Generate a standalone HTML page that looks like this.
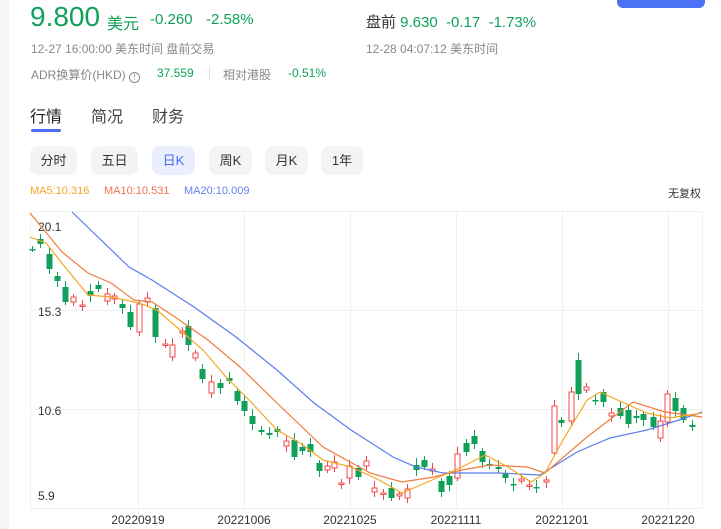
<!DOCTYPE html>
<html><head><meta charset="utf-8"><style>
*{margin:0;padding:0;box-sizing:border-box}
body{width:721px;height:529px;background:#fff;font-family:"Liberation Sans","Noto Sans CJK SC",sans-serif;position:relative;overflow:hidden;color:#333}
.strip{position:absolute;left:0;top:0;width:9px;height:529px;background:#f4f5f7}
.a{position:absolute;white-space:nowrap}
.g{color:#10a05a}
.gray{color:#888}
.btn{position:absolute;left:617px;top:-10px;width:88px;height:18px;background:#4a74f5;border-radius:6px}
.tb{position:absolute;top:146px;height:29px;background:#f4f4f6;border-radius:8px;font-size:13px;line-height:29px;text-align:center;color:#333}
</style></head><body>
<div class="strip"></div>
<div class="btn"></div>
<div class="a g" style="left:30px;top:2px;font-size:28px;line-height:30px">9.800</div>
<div class="a g" style="left:107px;top:10px;font-size:16px">美元</div>
<div class="a g" style="left:150px;top:11px;font-size:15px">-0.260</div>
<div class="a g" style="left:206px;top:11px;font-size:15px">-2.58%</div>
<div class="a" style="left:366px;top:11px;font-size:15px;color:#333">盘前 <span class="g">9.630 &nbsp;-0.17 &nbsp;-1.73%</span></div>
<div class="a gray" style="left:31px;top:40px;font-size:12px">12-27 16:00:00 美东时间 盘前交易</div>
<div class="a gray" style="left:366px;top:40px;font-size:12px">12-28 04:07:12 美东时间</div>
<div class="a gray" style="left:31px;top:66px;font-size:12px">ADR换算价(HKD) <span style="display:inline-block;width:11px;height:11px;border:1px solid #888;border-radius:50%;font-size:8px;line-height:9px;text-align:center;vertical-align:-1px">!</span></div>
<div class="a g" style="left:157px;top:66px;font-size:12px">37.559</div>
<div class="a" style="left:209px;top:67px;width:1px;height:12px;background:#ddd"></div>
<div class="a gray" style="left:223px;top:66px;font-size:12px">相对港股</div>
<div class="a g" style="left:288px;top:66px;font-size:12px">-0.51%</div>
<div class="a" style="left:30px;top:103px;font-size:16px;color:#222">行情</div>
<div class="a" style="left:91px;top:103px;font-size:16px;color:#444">简况</div>
<div class="a" style="left:152px;top:103px;font-size:16px;color:#444">财务</div>
<div class="a" style="left:31px;top:129px;width:30px;height:3px;background:#4a6cf5;border-radius:2px"></div>
<div class="tb" style="left:30px;width:47px">分时</div>
<div class="tb" style="left:91px;width:47px">五日</div>
<div class="tb" style="left:152px;width:43px;background:#eaeefd;color:#4a6cf5">日K</div>
<div class="tb" style="left:209px;width:43px">周K</div>
<div class="tb" style="left:265px;width:43px">月K</div>
<div class="tb" style="left:321px;width:42px">1年</div>
<div class="a" style="left:30px;top:185px;font-size:11px;color:#f5a623">MA5:10.316</div>
<div class="a" style="left:104px;top:185px;font-size:11px;color:#f07050">MA10:10.531</div>
<div class="a" style="left:184px;top:185px;font-size:11px;color:#6680f0">MA20:10.009</div>
<div class="a" style="left:668px;top:185px;font-size:11px;color:#333">无复权</div>
<svg class="a" style="left:0;top:0" width="721" height="529" id="c">
<g stroke="#f0f0f0" stroke-width="1">
<line x1="30" y1="211.5" x2="702" y2="211.5"/><line x1="30" y1="310.5" x2="702" y2="310.5"/><line x1="30" y1="409.5" x2="702" y2="409.5"/><line x1="30" y1="508.5" x2="702" y2="508.5"/>
<line x1="30.5" y1="211" x2="30.5" y2="509"/><line x1="138.5" y1="211" x2="138.5" y2="509"/><line x1="244.5" y1="211" x2="244.5" y2="509"/><line x1="350.5" y1="211" x2="350.5" y2="509"/><line x1="456.5" y1="211" x2="456.5" y2="509"/><line x1="562.5" y1="211" x2="562.5" y2="509"/><line x1="668.5" y1="211" x2="668.5" y2="509"/><line x1="702.5" y1="211" x2="702.5" y2="509"/>
</g>
<g font-size="12" fill="#333" font-family="Liberation Sans,sans-serif">
<text x="38" y="231">20.1</text><text x="38" y="316">15.3</text><text x="38" y="415">10.6</text><text x="38" y="500">5.9</text>
<g text-anchor="middle"><text x="138" y="524">20220919</text><text x="244" y="524">20221006</text><text x="350" y="524">20221025</text><text x="456" y="524">20221111</text><text x="562" y="524">20221201</text><text x="668" y="524">20221220</text></g>
</g>
<g id="k"></g>
<g fill="none" stroke-width="1.2">
<polyline stroke="#5b7cf0" points="72,212 129,267 152,280 194,307 236,337 277,370 314,403 351,430 393,457 416,467 443,473 499,473 540,475 577,452 610,438 647,430 679,420 702,412"/>
<polyline stroke="#f07c3c" points="30,213 62,252 88,273 111,283 134,300 152,302 175,317 208,340 240,367 277,403 323,447 370,473 402,482 434,477 462,470 490,465 527,467 545,473 587,437 633,402 665,412 702,417"/>
<polyline stroke="#f5a623" points="30,237 46,243 65,267 88,295 111,297 139,303 157,310 180,330 203,350 226,377 249,400 277,430 300,443 323,460 351,467 379,480 402,493 416,487 439,477 462,467 485,455 508,467 531,482 545,473 563,440 587,400 600,392 624,403 647,413 670,418 702,413"/>
</g>
</svg>
<script>
var d=[[23,249,249,'g'],[29,239,244,'g'],[35,254,269,'g'],[41,276,281,'g'],[47,287,302,'g'],[53,297,302,'r'],[59,305,306,'r'],[65,291,296,'g'],[71,285,289,'g'],[77,294,301,'r'],[82,296,299,'r'],[88,304,308,'g'],[94,312,327,'g'],[100,304,332,'r'],[106,298,302,'r'],[112,308,337,'g'],[119,344,345,'r'],[124,345,357,'r'],[131,331,333,'r'],[136,326,345,'g'],[141,353,358,'r'],[146,369,379,'g'],[152,382,393,'r'],[159,383,388,'g'],[165,378,381,'g'],[171,391,401,'g'],[176,401,411,'g'],[182,416,424,'g'],[188,430,432,'g'],[194,433,435,'g'],[200,429,432,'g'],[206,441,446,'r'],[212,440,457,'g'],[218,447,451,'g'],[224,444,452,'g'],[230,463,471,'g'],[236,466,470,'r'],[241,462,468,'r'],[246,483,484,'r'],[252,466,478,'r'],[258,468,477,'g'],[264,461,466,'r'],[270,488,492,'r'],[276,493,494,'r'],[282,488,498,'g'],[288,494,496,'r'],[294,489,498,'r'],[300,465,470,'g'],[306,460,467,'g'],[312,469,471,'r'],[318,481,492,'g'],[324,476,485,'g'],[330,454,478,'r'],[336,443,452,'g'],[342,436,444,'g'],[348,451,462,'g'],[353,464,466,'g'],[359,467,469,'g'],[364,474,478,'g'],[370,484,485,'g'],[376,479,481,'r'],[382,485,486,'r'],[387,487,488,'g'],[394,480,482,'r'],[400,406,453,'r'],[405,420,423,'g'],[412,392,421,'r'],[417,360,394,'g'],[423,387,390,'r'],[429,400,401,'g'],[435,392,402,'g'],[441,413,416,'r'],[447,408,416,'g'],[453,410,424,'g'],[459,416,418,'g'],[464,414,420,'g'],[471,417,427,'g'],[476,421,438,'r'],[481,394,422,'r'],[487,398,411,'g'],[493,408,420,'g'],[499,425,427,'g']];
var s='';d.forEach(function(c,i){var x=Math.round(c[0]*1.386)+0.5,t=c[1],b=c[2],col=c[3]=='g'?'#10a05a':'#f04848';var w=3+((i*7)%5);
s+='<line x1="'+x+'" x2="'+x+'" y1="'+(t-w)+'" y2="'+(b+3+(i%4))+'" stroke="'+col+'"/>';
if(c[3]=='g')s+='<rect x="'+(x-3)+'" y="'+t+'" width="6" height="'+Math.max(b-t,1.5)+'" fill="'+col+'"/>';
else s+='<rect x="'+(x-2.5)+'" y="'+t+'" width="5" height="'+Math.max(b-t,1.5)+'" fill="#fff" stroke="'+col+'"/>';});
document.getElementById('k').innerHTML=s;
</script>
</body></html>
